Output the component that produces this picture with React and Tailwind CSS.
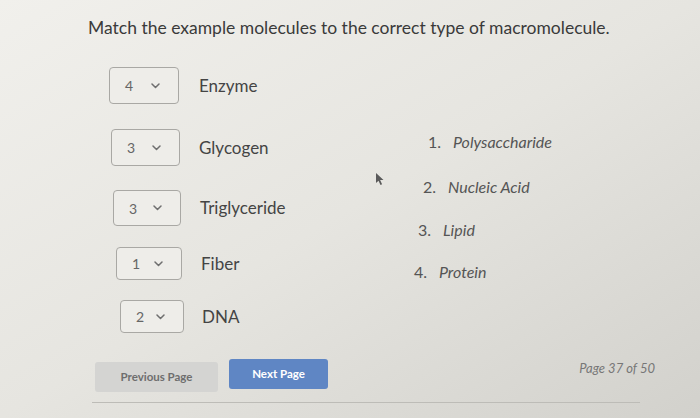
import React from 'react';

const rows = [
  { value: '4', label: 'Enzyme', box: 'ml-[109px] w-[70px] h-[37px]', gap: 'ml-[20px]', top: 'mt-0' },
  { value: '3', label: 'Glycogen', box: 'ml-[111px] w-[69px] h-[37px]', gap: 'ml-[19px]', top: 'mt-[25px]' },
  { value: '3', label: 'Triglyceride', box: 'ml-[113px] w-[68px] h-[36px]', gap: 'ml-[19px]', top: 'mt-[24px]' },
  { value: '1', label: 'Fiber', box: 'ml-[116px] w-[66px] h-[33px]', gap: 'ml-[19px]', top: 'mt-[21px]' },
  { value: '2', label: 'DNA', box: 'ml-[120px] w-[64px] h-[33px]', gap: 'ml-[18px]', top: 'mt-[20px]' },
];

const options = [
  { n: '1.', text: 'Polysaccharide', cls: 'ml-[14px] mt-0' },
  { n: '2.', text: 'Nucleic Acid', cls: 'ml-[9px] mt-[25px]' },
  { n: '3.', text: 'Lipid', cls: 'ml-[4px] mt-[23px]' },
  { n: '4.', text: 'Protein', cls: 'ml-0 mt-[22px]' },
];

const Chevron = () => (
  <svg width="9" height="6" viewBox="0 0 9 6" className="text-[#6f6f6f]">
    <path d="M1 1l3.5 3.5L8 1" fill="none" stroke="currentColor" strokeWidth="1.5" strokeLinecap="round" strokeLinejoin="round" />
  </svg>
);

const Select = ({ value, box }) => (
  <div className={`${box} flex items-center justify-between pl-[15px] pr-[18px] border border-[#a9a8a4] rounded-[4px] bg-[#eeede9]`}>
    <span className="text-[14px] text-[#666]">{value}</span>
    <Chevron />
  </div>
);

export default function App() {
  return (
    <div
      className="relative w-[700px] h-[418px] overflow-hidden bg-linear-to-br from-[#f1f0ec] via-[#e6e5e0] to-[#d2d1cc] text-[#444]"
      style={{ fontFamily: 'Lato, "Open Sans", sans-serif' }}
    >
      <h1 className="pt-[16px] pl-[88px] text-[17.5px] leading-[24px] text-[#3a3a3a]">
        Match the example molecules to the correct type of macromolecule.
      </h1>

      <div className="flex mt-[27px]">
        <div className="w-[414px] flex flex-col">
          {rows.map((r, i) => (
            <div key={i} className={`flex items-center ${r.top}`}>
              <Select value={r.value} box={r.box} />
              <span className={`${r.gap} text-[17px] text-[#444]`}>{r.label}</span>
            </div>
          ))}
        </div>
        <div className="flex flex-col pt-[65px]">
          {options.map((o, i) => (
            <div key={i} className={`flex items-center leading-[20px] text-[16px] text-[#555] ${o.cls}`}>
              <span className="w-[25px] not-italic">{o.n}</span>
              <span className="italic">{o.text}</span>
            </div>
          ))}
        </div>
      </div>

      <div className="flex items-start mt-[26px] pl-[95px] pr-[45px]">
        <button className="mt-[3px] w-[123px] h-[30px] rounded-[3px] bg-[#d4d4d2] text-[11.5px] font-bold text-[#6e6e6e]">
          Previous Page
        </button>
        <button className="ml-[11px] w-[99px] h-[30px] rounded-[3px] bg-[#5f86c4] text-[11.5px] font-bold text-white">
          Next Page
        </button>
        <span className="ml-auto mt-[1px] text-[13px] italic text-[#777] leading-[16px]">Page 37 of 50</span>
      </div>

      <div className="ml-[92px] mr-[60px] mt-[10px] h-px bg-[#bdbcb7]" />

      <svg className="absolute left-[375px] top-[172px]" width="9" height="14" viewBox="0 0 9 14">
        <path d="M1 1v10l2.5-2.3L5.5 13l1.6-.8-2-4.2H8.5z" fill="#5a5a5a" />
      </svg>
    </div>
  );
}
